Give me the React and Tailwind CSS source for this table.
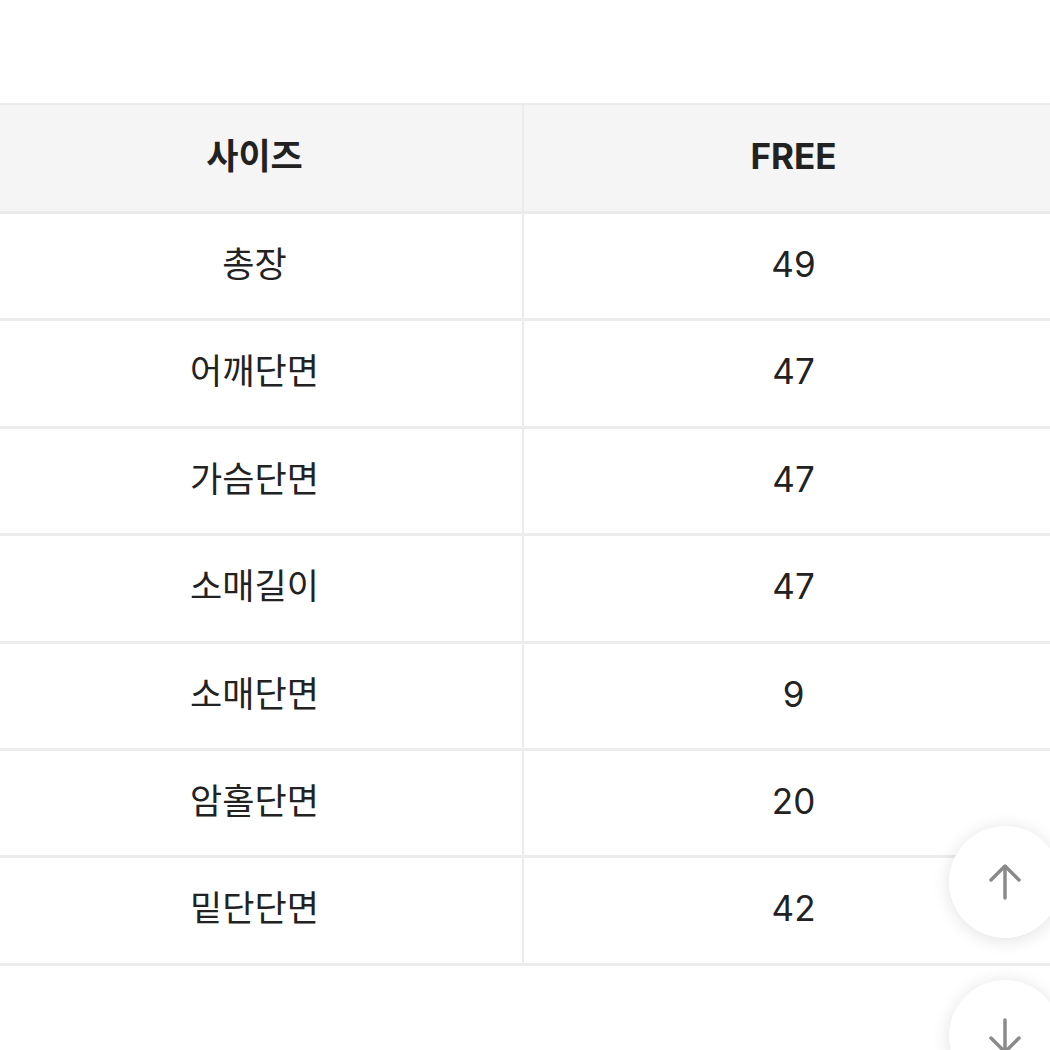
const rows = [
  ["총장", "49"],
  ["어깨단면", "47"],
  ["가슴단면", "47"],
  ["소매길이", "47"],
  ["소매단면", "9"],
  ["암홀단면", "20"],
  ["밑단단면", "42"],
];

const font = { fontFamily: 'Inter, "Noto Sans CJK KR", "Noto Sans", sans-serif' };

const ArrowUp = () => (
  <svg width="40" height="40" viewBox="0 0 40 40" fill="none" stroke="#8a8a8a" strokeWidth="3.5" strokeLinecap="round" strokeLinejoin="round">
    <path d="M20 36V5" />
    <path d="M6 18L20 4l14 14" />
  </svg>
);

const ArrowDown = () => (
  <svg width="40" height="40" viewBox="0 0 40 40" fill="none" stroke="#8a8a8a" strokeWidth="3.5" strokeLinecap="round" strokeLinejoin="round">
    <path d="M20 4v31" />
    <path d="M6 22l14 14 14-14" />
  </svg>
);

export default function App() {
  return (
    <div className="relative w-[1050px] h-[1050px] overflow-hidden bg-white text-[#222]" style={font}>
      <div className="pt-[103px]">
        <div className="ml-[-13px] w-[1076px] border-t-[2px] border-[#ececec]">
          {/* header */}
          <div className="flex h-[109px] bg-[#f5f5f5] border-b-[3px] border-[#ebebeb]">
            <div className="w-[537px] flex items-center justify-center pb-[4px] border-r-[2px] border-[#ebebeb] text-[35px] font-bold">
              사이즈
            </div>
            <div className="flex-1 flex items-center justify-center pb-[4px] text-[35px] font-bold">FREE</div>
          </div>
          {rows.map(([label, value], i) => (
            <div key={i} className="flex h-[107.4px] border-b-[3px] border-[#ececec]">
              <div className="w-[537px] flex items-center justify-center pb-[4px] border-r-[2px] border-[#ececec] text-[35px]">
                {label}
              </div>
              <div className="flex-1 flex items-center justify-center pb-[4px] text-[35px]">{value}</div>
            </div>
          ))}
        </div>
      </div>

      {/* floating scroll buttons */}
      <button className="absolute left-[949px] top-[826px] w-[112px] h-[112px] rounded-full bg-white flex items-center justify-center shadow-[0_2px_18px_rgba(0,0,0,0.12)]">
        <ArrowUp />
      </button>
      <button className="absolute left-[949px] top-[980px] w-[112px] h-[112px] rounded-full bg-white flex items-center justify-center shadow-[0_2px_18px_rgba(0,0,0,0.12)]">
        <ArrowDown />
      </button>
    </div>
  );
}
